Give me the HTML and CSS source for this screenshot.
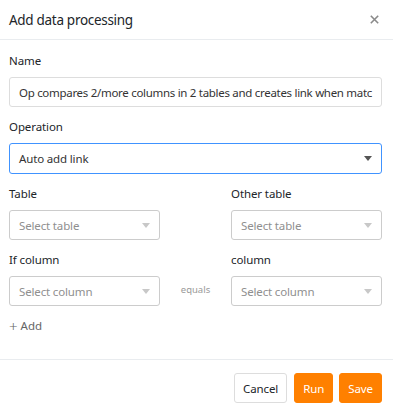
FILE: index.html
```html
<!DOCTYPE html>
<html lang="en">
<head>
    <meta charset="UTF-8">
    <meta name="viewport" content="width=device-width, initial-scale=1.0">
    <title>Add data processing</title>
    <link rel="stylesheet" href="styles.css">
</head>
<body>

<div class="dialog">
    <div class="dialog-header">
        <h5 class="dialog-title">Add data processing</h5>
        <span class="dialog-close">
            <svg width="9" height="9" viewBox="0 0 9 9"><path d="M0.8 0.8 L8.2 8.2 M8.2 0.8 L0.8 8.2" stroke="#8a8a8a" stroke-width="1.6" fill="none"/></svg>
        </span>
    </div>

    <div class="dialog-body">
        <div class="form-group">
            <label class="form-label">Name</label>
            <div class="form-control">Op compares 2/more columns in 2 tables and creates link when matc</div>
        </div>

        <div class="form-group">
            <label class="form-label">Operation</label>
            <div class="select focused">
                <span class="select-value">Auto add link</span>
                <span class="caret dark"></span>
            </div>
        </div>

        <div class="form-group pair">
            <div class="pair-item">
                <label class="form-label">Table</label>
                <div class="select">
                    <span class="select-placeholder">Select table</span>
                    <span class="caret"></span>
                </div>
            </div>
            <div></div>
            <div class="pair-item">
                <label class="form-label">Other table</label>
                <div class="select">
                    <span class="select-placeholder">Select table</span>
                    <span class="caret"></span>
                </div>
            </div>
        </div>

        <div class="form-group pair">
            <div class="pair-item">
                <label class="form-label">If column</label>
                <div class="select">
                    <span class="select-placeholder">Select column</span>
                    <span class="caret"></span>
                </div>
            </div>
            <div class="equals">equals</div>
            <div class="pair-item">
                <label class="form-label">column</label>
                <div class="select">
                    <span class="select-placeholder">Select column</span>
                    <span class="caret"></span>
                </div>
            </div>
        </div>

        <div class="add-link"><span class="plus">+</span>Add</div>
    </div>

    <div class="dialog-footer">
        <button class="btn btn-secondary">Cancel</button>
        <button class="btn btn-primary">Run</button>
        <button class="btn btn-primary">Save</button>
    </div>
</div>

</body>
</html>
```

FILE: styles.css
```css
/* Dialog layout */
body { margin: 0; background-color: #fff; font-family: 'Noto Sans', 'Open Sans', Arial, sans-serif; color: #212529; }
.dialog { width: 393px; height: 417px; background-color: #fff; }
.dialog-header { height: 39px; border-bottom: 1px solid #e9ecef; display: flex; align-items: center; justify-content: space-between; padding: 0 14px 0 9px; }
.dialog-title { margin: 0; font-size: 13.5px; letter-spacing: -0.3px; font-weight: 400; color: #212529; }
.dialog-close { display: flex; }
.dialog-body { padding: 12px 11px 24px 9px; }
.form-group { margin-bottom: 11px; }
.form-label { display: block; font-size: 11.5px; letter-spacing: -0.1px; line-height: 18px; margin-bottom: 7px; color: #212529; }
.form-control, .select { height: 30px; box-sizing: border-box; border: 1px solid #ddd; border-radius: 3px; font-size: 11.5px; letter-spacing: -0.15px; display: flex; align-items: center; padding: 0 9px; white-space: nowrap; overflow: hidden; color: #333; }
.form-control { letter-spacing: -0.3px; }
.select { justify-content: space-between; border-color: #ccc; }
.select.focused { height: 31px; border-color: #4093ff; }
.select-placeholder { color: #8f8f8f; }
.caret { width: 0; height: 0; border-left: 4.5px solid transparent; border-right: 4.5px solid transparent; border-top: 5px solid #c8c8c8; }
.caret.dark { border-top-color: #555; }
.pair { display: grid; grid-template-columns: 151px 1fr 151px; align-items: end; }
.equals { font-size: 9.5px; color: #999; text-align: center; height: 32px; line-height: 32px; }
.add-link { margin-top: 2px; font-size: 11.5px; line-height: 18px; color: #666; display: flex; align-items: center; }
.plus { font-size: 15px; font-weight: 300; margin-right: 3px; }
.dialog-footer { border-top: 1px solid #e9ecef; padding: 13px 11px 0 9px; display: flex; justify-content: flex-end; gap: 6px; }
.btn { height: 30px; border-radius: 3px; font-family: inherit; font-size: 11.5px; letter-spacing: -0.1px; padding: 0 8px; cursor: pointer; }
.btn-secondary { background-color: #fff; border: 1px solid #ddd; color: #212529; margin-right: 1px; }
.btn-primary { background-color: #ff8000; border: 1px solid #ff8000; color: #fff; }
```
